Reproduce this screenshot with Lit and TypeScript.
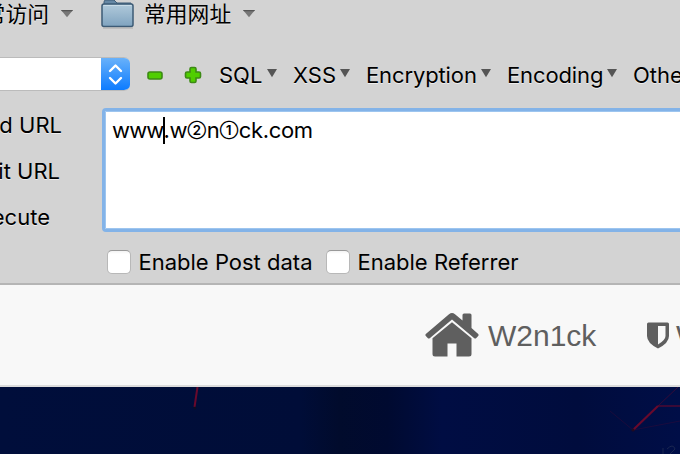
import { LitElement, html, css } from "lit";
import { customElement, property } from "lit/decorators.js";

@customElement("drop-arrow")
class DropArrow extends LitElement {
  static styles = css`
    :host { display: block; width: 12px; height: 8px; flex: none; }
    svg { display: block; }
  `;
  render() {
    return html`<svg width="12" height="8" viewBox="0 0 12 8">
      <path d="M0 0H12L6 7.3Z" fill="#777"/><path d="M0 0H12L11 1.2H1Z" fill="#555"/>
    </svg>`;
  }
}

@customElement("tool-menu")
class ToolMenu extends LitElement {
  @property() label = "";
  static styles = css`
    :host { display: flex; flex: none; white-space: nowrap; }
    svg { display: block; flex: none; margin: 9px 0 0 auto; }
  `;
  render() {
    return html`<span>${this.label}</span>
      <svg width="10" height="9" viewBox="0 0 10 9"><path d="M0 0H10L5 8.2Z" fill="#555"/></svg>`;
  }
}

@customElement("check-field")
class CheckField extends LitElement {
  @property() label = "";
  static styles = css`
    :host { display: flex; align-items: center; flex: none; white-space: nowrap; }
    .box {
      box-sizing: border-box; width: 24px; height: 24px; margin-right: 7.5px;
      border: 1px solid #b8b8b8; border-top-color: #999; border-radius: 5px;
      background: linear-gradient(#f3f3f3, #fff 3px);
    }
  `;
  render() {
    return html`<span class="box"></span><span>${this.label}</span>`;
  }
}

@customElement("app-root")
class AppRoot extends LitElement {
  static styles = css`
    :host {
      display: flex; flex-direction: column; width: 680px; height: 454px; overflow: hidden;
      background: #d3d3d3; color: #000;
      font-family: Inter, "Noto Sans CJK SC", sans-serif; font-size: 22px; line-height: 30px;
    }
    svg { display: block; flex: none; }
    .bookmarks {
      display: flex; height: 57px; flex: none; white-space: nowrap;
      font-family: "Noto Sans CJK SC", sans-serif; font-size: 21.8px; line-height: 26px;
      text-shadow: 0 1px 0 #e8e8e8;
    }
    .clipped { display: flex; justify-content: flex-end; width: 49px; flex: none; }
    .bookmarks drop-arrow { margin: 10px 0 0 12px; }
    .folder { margin: 0 9px 0 28px; }
    .tools { display: flex; height: 51px; flex: none; text-shadow: 0 1px 0 #eee; }
    .select {
      display: flex; box-sizing: border-box; width: 130px; height: 34px; flex: none;
      border: 1px solid #bbb; border-left: 0; border-right: 0; border-radius: 0 6px 6px 0;
      background: #fff; overflow: hidden; justify-content: flex-end;
    }
    .stepper { width: 29px; margin: -1px 0; background: linear-gradient(#6bb3fa, #0a7aff); }
    .minus { margin: 14px 0 0 17px; }
    .plus { margin: 9px 0 0 21px; }
    .sql { width: 58px; margin: 3px 0 0 17px; }
    .xss { width: 57px; margin: 3px 0 0 16px; }
    .encr { width: 125px; margin: 3px 0 0 16px; letter-spacing: -.12px; }
    .enco { width: 110px; margin: 3px 0 0 16px; letter-spacing: -.12px; }
    .other { margin: 3px 0 0 16px; }
    .main { display: flex; height: 124px; flex: none; }
    .actions { display: flex; flex-direction: column; gap: 16px; width: 102px; flex: none; margin-top: 2px; text-shadow: 0 1px 0 #eee; }
    .action { display: flex; justify-content: flex-end; white-space: nowrap; height: 30px; }
    .load { width: 62px; } .split { width: 60px; } .exec { width: 50px; }
    .field {
      display: flex; box-sizing: border-box; width: 590px; height: 124px; flex: none;
      border: 3px solid #83b3e8; border-radius: 4px; background: #fff;
      box-shadow: inset 0 0 0 1px #9dc5ef; padding: 4px 7px; white-space: nowrap;
      letter-spacing: -.35px;
    }
    .www { letter-spacing: -.85px; }
    .caret { width: 2px; height: 27px; margin: 2px -2px 0 0; background: #000; }
    .digit {
      display: flex; justify-content: center; width: 19.5px; flex: none;
      font-size: 13.4px; font-weight: 600; letter-spacing: 0;
    }
    .checks { display: flex; height: 51px; flex: none; align-items: center; padding: 8px 0 0 107px; box-sizing: border-box; }
    .post { width: 219px; }
    .nav {
      display: flex; align-items: center; box-sizing: border-box; height: 104px; flex: none;
      border-top: 2px solid #b5b5b5; border-bottom: 2px solid #dcdcdc; background: #f8f8f8;
      color: #5f5f5f; padding-left: 425px; white-space: nowrap;
      font-family: "Liberation Sans", Arial, sans-serif; font-size: 30px;
    }
    .nav span { padding-top: 1px; }
    .brand { width: 159px; margin-left: 9px; flex: none; }
    .shield { margin-right: 7px; }
  `;

  render() {
    return html`
      <div class="bookmarks">
        <span class="clipped">常访问</span><drop-arrow></drop-arrow>
        <svg class="folder" width="34" height="29" viewBox="0 0 34 29">
          <defs><linearGradient id="f" x2="0" y2="1"><stop stop-color="#b1cadb"/><stop offset="1" stop-color="#7fa3bf"/></linearGradient></defs>
          <path d="M3 8V2Q3 0 5 0H13L16 3H30V8Z" fill="#6688a5" stroke="#3f5d78"/>
          <rect x="1" y="4" width="31" height="22.5" rx="2" fill="url(#f)" stroke="#3d5b76" stroke-width="1.5"/>
          <path d="M2.5 5.5H30.5" stroke="#c9dce8"/><path d="M2 28H32" stroke="#aaa"/>
        </svg>
        <span>常用网址</span><drop-arrow></drop-arrow>
      </div>
      <div class="tools">
        <div class="select"><svg class="stepper" width="29" height="34" viewBox="0 0 29 34">
          <path d="M9 14L14.5 8.5L20 14M9 21L14.5 26.5L20 21" fill="none" stroke="#fff" stroke-width="2.4" stroke-linecap="round" stroke-linejoin="round"/>
        </svg></div>
        <svg class="minus" width="16" height="9" viewBox="0 0 16 9"><rect x="1" y="1" width="14" height="7" rx="2" fill="#50ce00" stroke="#3c8a14" stroke-width="1.6"/></svg>
        <svg class="plus" width="18" height="18" viewBox="0 0 18 18"><path d="M6 3Q6 1.5 7.5 1.5H10.5Q12 1.5 12 3V6H15Q16.5 6 16.5 7.5V10.5Q16.5 12 15 12H12V15Q12 16.5 10.5 16.5H7.5Q6 16.5 6 15V12H3Q1.5 12 1.5 10.5V7.5Q1.5 6 3 6H6Z" fill="#50ce00" stroke="#3c8a14" stroke-width="1.6"/></svg>
        <tool-menu class="sql" label="SQL"></tool-menu>
        <tool-menu class="xss" label="XSS"></tool-menu>
        <tool-menu class="encr" label="Encryption"></tool-menu>
        <tool-menu class="enco" label="Encoding"></tool-menu>
        <tool-menu class="other" label="Other"></tool-menu>
      </div>
      <div class="main">
        <div class="actions">
          <span class="action load">Load URL</span>
          <span class="action split">Split URL</span>
          <span class="action exec">Execute</span>
        </div>
        <div class="field"><span class="www">www</span><span class="caret"></span><span>.w</span><span class="digit">②</span><span>n</span><span class="digit">①</span><span>ck.com</span></div>
      </div>
      <div class="checks">
        <check-field class="post" label="Enable Post data"></check-field>
        <check-field label="Enable Referrer"></check-field>
      </div>
      <div class="nav">
        <svg width="54" height="44" viewBox="0 0 54 44" fill="#5f5f5f">
          <path d="M.8 21L24 1.2Q27 -1 30 1.2L37.5 7.6V2Q37.5 .5 39 .5H45Q46.5 .5 46.5 2V15L53.2 21Q54 22 53.2 23L51.3 25Q50.3 26 49 25L27 6.5L5 25Q3.7 26 2.7 25L.8 23Q0 22 .8 21Z"/>
          <path d="M27 9.2L46.5 25.3V41Q46.5 43.5 44 43.5H31.5V30.5H22.5V43.5H10Q7.5 43.5 7.5 41V25.3Z"/>
        </svg>
        <span class="brand">W2n1ck</span>
        <svg class="shield" width="22" height="27" viewBox="0 0 22 27">
          <path fill-rule="evenodd" fill="#5f5f5f" d="M1.5 .5H20.5Q22 .5 22 2V14Q22 21 11 26.5Q0 21 0 14V2Q0 .5 1.5 .5ZM11 4V22.5Q18.5 18 18.5 14V4Z"/>
        </svg>
        <span>W2n1ck</span>
      </div>
      <svg width="680" height="67" viewBox="0 0 680 67">
        <defs><linearGradient id="sky"><stop stop-color="#000e3b"/><stop offset=".44" stop-color="#000d38"/><stop offset=".5" stop-color="#010b2c"/><stop offset=".57" stop-color="#000a30"/><stop offset=".65" stop-color="#000d43"/><stop offset=".85" stop-color="#000c3d"/><stop offset="1" stop-color="#000e47"/></linearGradient></defs>
        <rect width="680" height="67" fill="url(#sky)"/>
        <g fill="none" stroke="#68092c">
          <path d="M197.5 0L194.5 20" stroke-width="2"/>
          <path d="M633 43L658 19" stroke-width="2.2"/>
          <path d="M658 19H680" stroke-width="1.4" opacity=".8"/>
          <path d="M658 19L678 0" opacity=".5"/><path d="M633 43L680 34M633 43L610 24" opacity=".25"/>
        </g>
        <circle cx="195" cy="21" r="1.3" fill="#100d20"/><circle cx="633" cy="43" r="1.6" fill="#210b20"/>
        <path d="M663 67V61M667 62Q673 56 675 62L670 67" stroke="#1a2650" fill="none"/>
      </svg>
    `;
  }
}
